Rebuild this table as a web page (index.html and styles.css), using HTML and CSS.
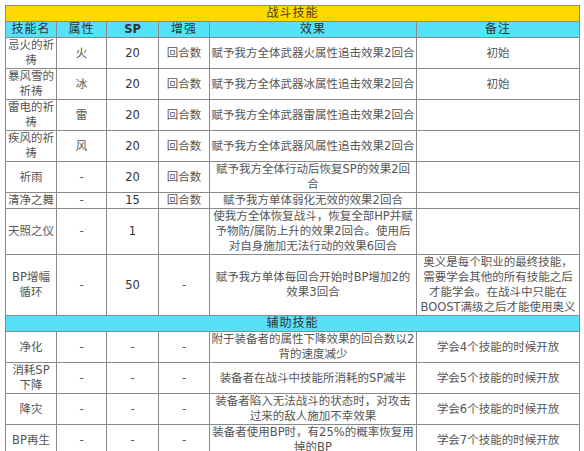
FILE: index.html
```html
<!DOCTYPE html>
<html lang="zh">
<head>
<meta charset="utf-8">
<title>战斗技能</title>
<link rel="stylesheet" href="styles.css">
</head>
<body>
<table class="skills">
  <colgroup>
    <col class="c-name"><col class="c-attr"><col class="c-sp"><col class="c-boost"><col class="c-effect"><col class="c-note">
  </colgroup>
  <tbody>
    <tr class="section gold"><td colspan="6">战斗技能</td></tr>
    <tr class="head">
      <td>技能名</td><td>属性</td><td class="latin">SP</td><td>增强</td><td>效果</td><td>备注</td>
    </tr>
    <tr><td>忌火的祈祷</td><td>火</td><td class="num">20</td><td>回合数</td><td>赋予我方全体武器火属性追击效果2回合</td><td>初始</td></tr>
    <tr><td>暴风雪的祈祷</td><td>冰</td><td class="num">20</td><td>回合数</td><td>赋予我方全体武器冰属性追击效果2回合</td><td>初始</td></tr>
    <tr><td>雷电的祈祷</td><td>雷</td><td class="num">20</td><td>回合数</td><td>赋予我方全体武器雷属性追击效果2回合</td><td></td></tr>
    <tr><td>疾风的祈祷</td><td>风</td><td class="num">20</td><td>回合数</td><td>赋予我方全体武器风属性追击效果2回合</td><td></td></tr>
    <tr><td>祈雨</td><td>-</td><td class="num">20</td><td>回合数</td><td>赋予我方全体行动后恢复SP的效果2回合</td><td></td></tr>
    <tr><td>清净之舞</td><td>-</td><td class="num">15</td><td>回合数</td><td>赋予我方单体弱化无效的效果2回合</td><td></td></tr>
    <tr><td>天照之仪</td><td>-</td><td class="num">1</td><td></td><td>使我方全体恢复战斗，恢复全部HP并赋予物防/属防上升的效果2回合。使用后对自身施加无法行动的效果6回合</td><td></td></tr>
    <tr><td>BP增幅循环</td><td>-</td><td class="num">50</td><td>-</td><td>赋予我方单体每回合开始时BP增加2的效果3回合</td><td>奥义是每个职业的最终技能，需要学会其他的所有技能之后才能学会。在战斗中只能在BOOST满级之后才能使用奥义</td></tr>
    <tr class="section cyan"><td colspan="6">辅助技能</td></tr>
    <tr><td>净化</td><td>-</td><td>-</td><td>-</td><td>附于装备者的属性下降效果的回合数以2背的速度减少</td><td>学会4个技能的时候开放</td></tr>
    <tr><td>消耗SP下降</td><td>-</td><td>-</td><td>-</td><td>装备者在战斗中技能所消耗的SP减半</td><td>学会5个技能的时候开放</td></tr>
    <tr><td>降灾</td><td>-</td><td>-</td><td>-</td><td>装备者陷入无法战斗的状态时，对攻击过来的敌人施加不幸效果</td><td>学会6个技能的时候开放</td></tr>
    <tr><td>BP再生</td><td>-</td><td>-</td><td>-</td><td>装备者使用BP时，有25%的概率恢复用掉的BP</td><td>学会7个技能的时候开放</td></tr>
  </tbody>
</table>
</body>
</html>
```

FILE: styles.css
```css
html, body {
  margin: 0;
  padding: 0;
  background: #ffffff;
}

body {
  padding: 5px 0 0 5px;
  font-family: "DejaVu Sans", "Noto Sans CJK SC", sans-serif;
  font-size: 11.5px;
  line-height: 15px;
  color: #555555;
}

.skills {
  border-collapse: collapse;
  table-layout: fixed;
  width: 574px;
}

.c-name { width: 51px; }
.c-attr { width: 50px; }
.c-sp { width: 52px; }
.c-boost { width: 51px; }
.c-effect { width: 207px; }
.c-note { width: 163px; }

.skills td {
  border: 1px solid #8a8a8a;
  padding: 0 1px;
  text-align: center;
  vertical-align: middle;
  background: #ffffff;
  word-break: normal;
  overflow-wrap: break-word;
}

.skills .num {
  color: #333333;
}

.skills .head td {
  background: #55e1f8;
  color: #333333;
  font-size: 12px;
  letter-spacing: 1px;
}

.skills .head td.latin {
  font-weight: bold;
  letter-spacing: 0;
  font-size: 11.5px;
}

.skills .section td {
  color: #4a4000;
  font-size: 12px;
  letter-spacing: 1px;
}

.skills .gold td {
  background: #ffd800;
}

.skills .cyan td {
  background: #55e1f8;
  color: #333333;
}
```
